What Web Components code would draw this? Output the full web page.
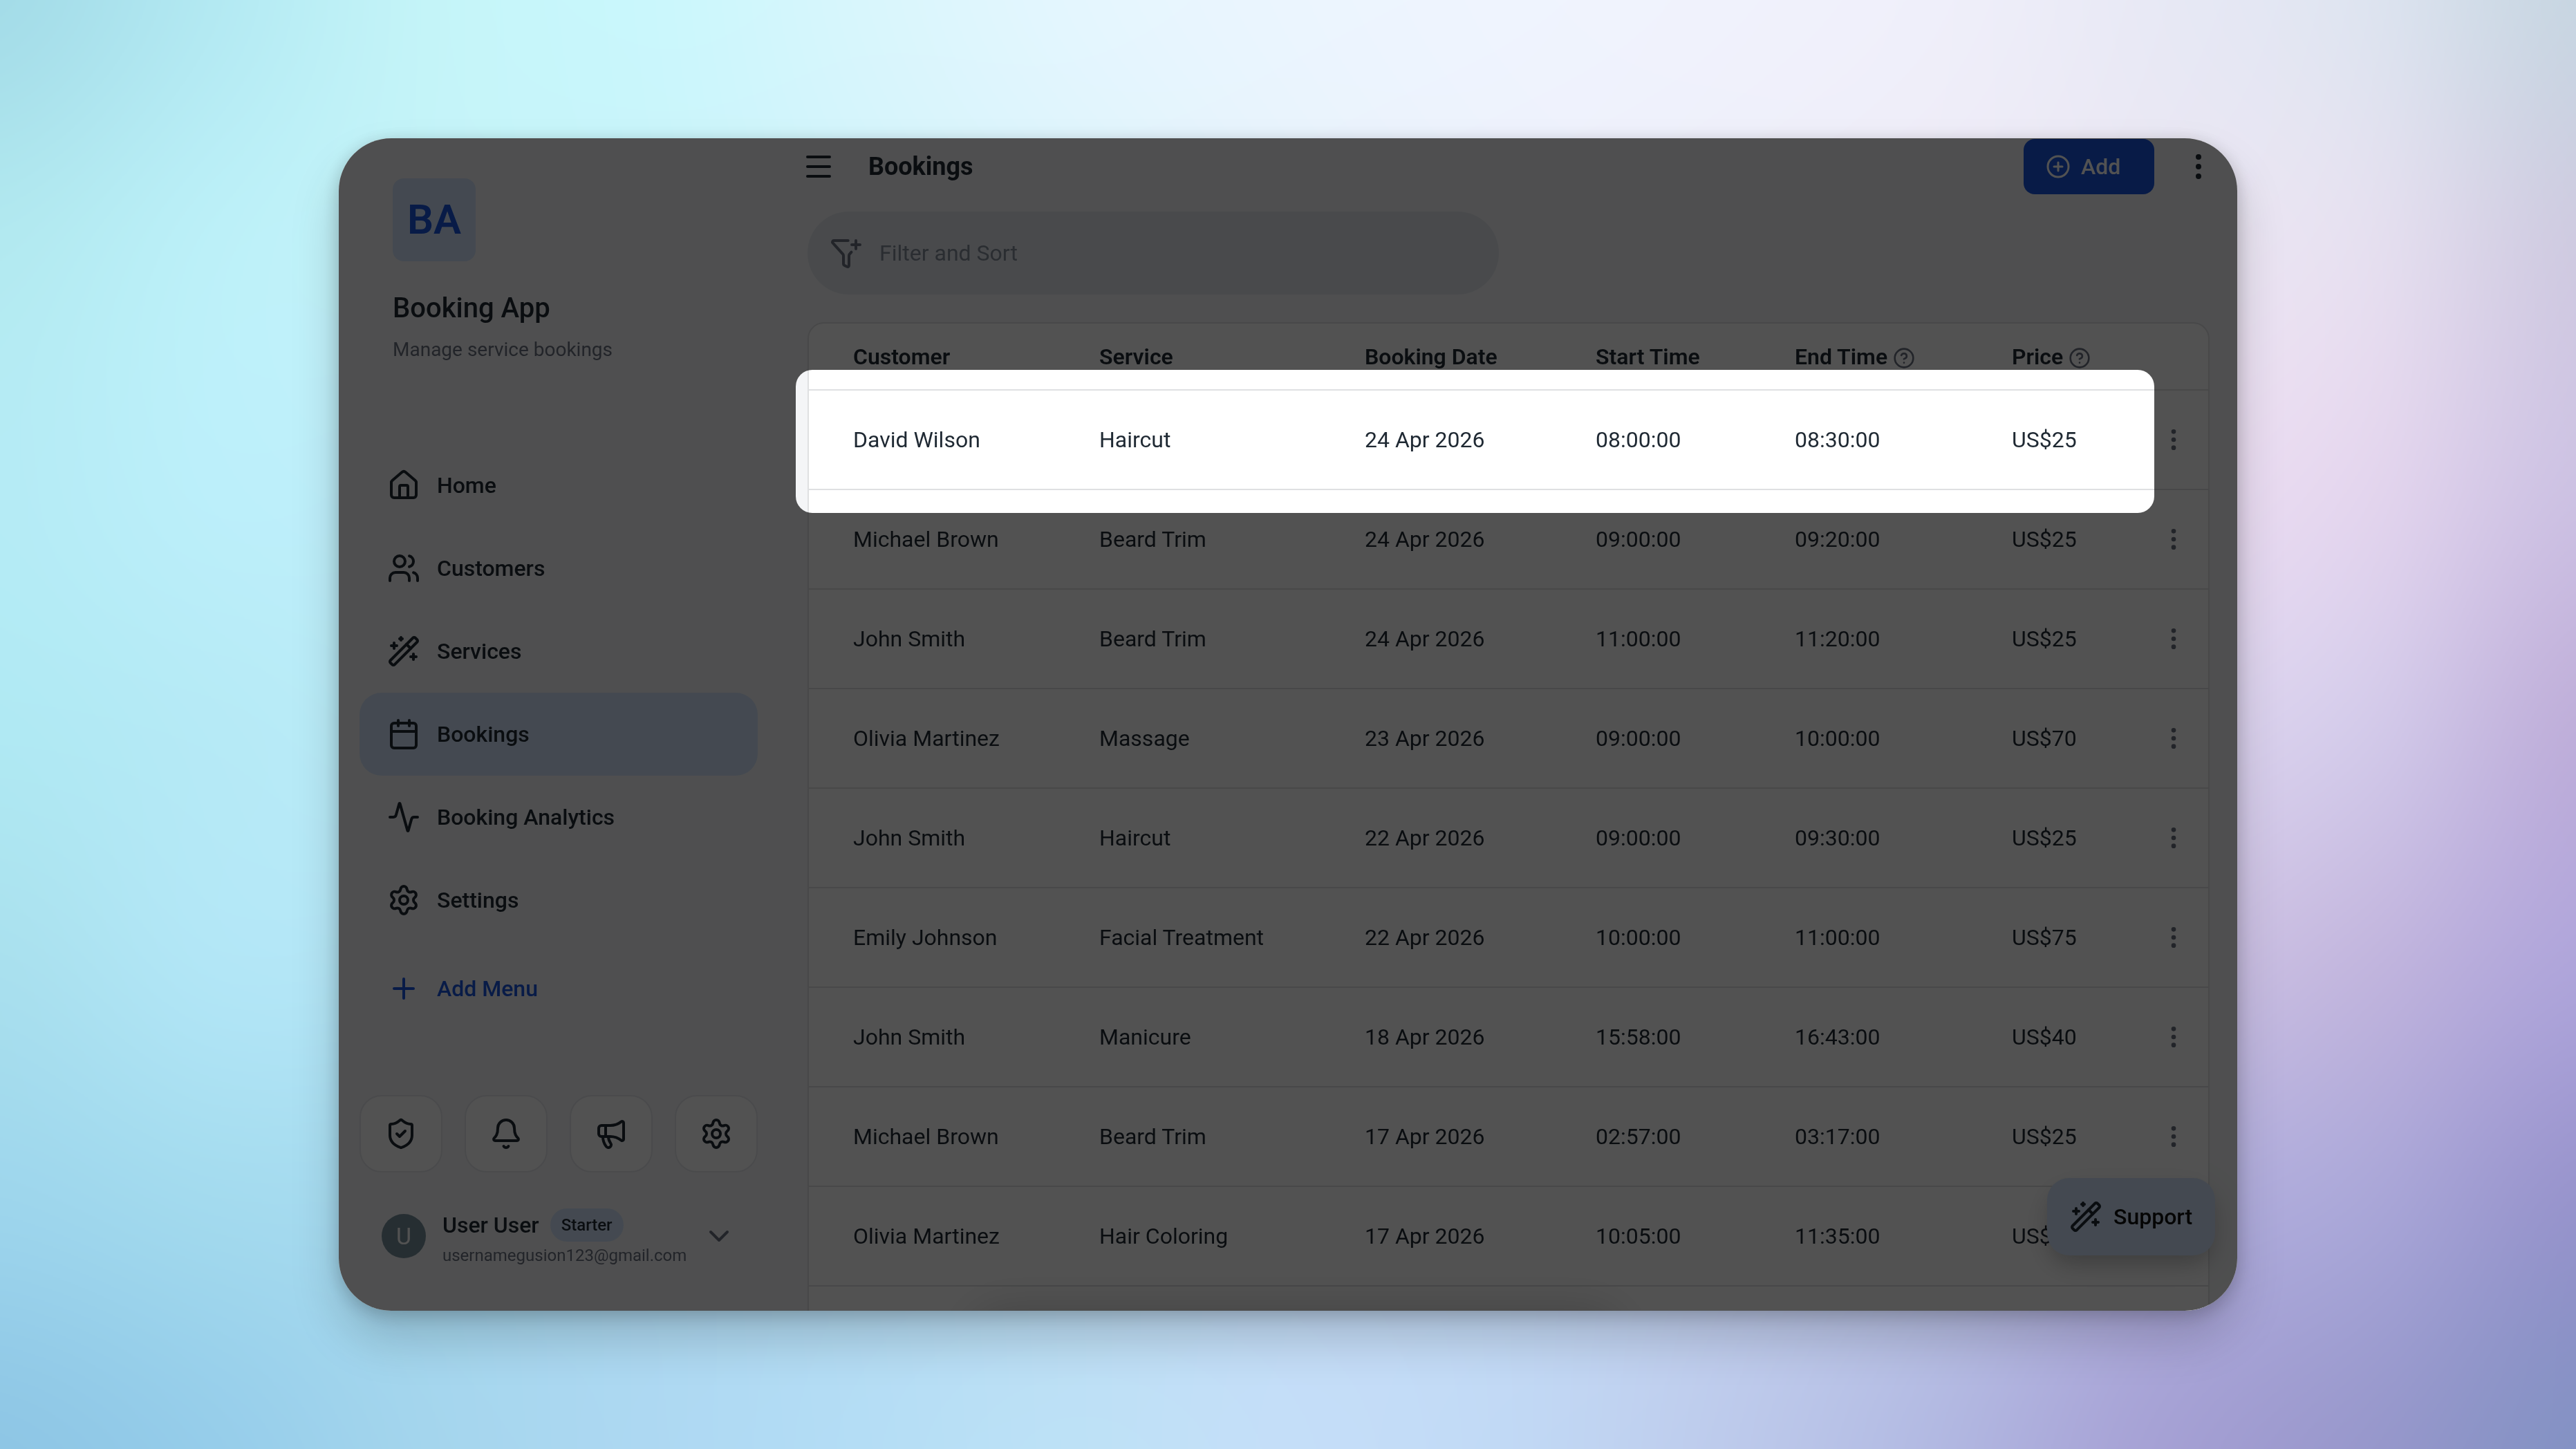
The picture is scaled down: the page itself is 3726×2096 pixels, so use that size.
<!DOCTYPE html>
<html lang="en">
<head>
<meta charset="utf-8">
<title>Booking App</title>
<style>
	html, body {
		margin: 0;
		height: 100%;
	}

	body {
		font-family: Roboto, "Liberation Sans", sans-serif;
		font-size: 32px;
		color: #1f2933;
		overflow: hidden;

		--primary: #1a56db;
		--tint: #d2e4fa;
		--surface: #f4f5f7;
		--line: #dfe0e2;
		--muted: #6b7280;
	}
</style>
</head>
<body>

<mesh-backdrop>
	<app-window>
		<side-bar slot="side">
			<brand-block initials="BA" name="Booking App">Manage service bookings</brand-block>
			<nav-item icon="house">Home</nav-item>
			<nav-item icon="users">Customers</nav-item>
			<nav-item icon="wand">Services</nav-item>
			<nav-item icon="calendar" active>Bookings</nav-item>
			<nav-item icon="activity">Booking Analytics</nav-item>
			<nav-item icon="settings">Settings</nav-item>
			<nav-item icon="plus" accent>Add Menu</nav-item>
			<quick-actions icons="shield bell megaphone settings"></quick-actions>
			<user-card name="User User" plan="Starter" email="usernamegusion123@gmail.com"></user-card>
		</side-bar>

		<page-header>Bookings</page-header>
		<filter-bar>Filter and Sort</filter-bar>
		<booking-table></booking-table>

		<bottom-sheet slot="over"></bottom-sheet>
		<support-button slot="over">Support</support-button>
		<spot-light slot="over"></spot-light>
	</app-window>
</mesh-backdrop>

<script>
const ICONS = {
	house: '<path d="M15 21v-8a1 1 0 0 0-1-1h-4a1 1 0 0 0-1 1v8"/><path d="M3 10a2 2 0 0 1 .709-1.528l7-5.999a2 2 0 0 1 2.582 0l7 5.999A2 2 0 0 1 21 10v9a2 2 0 0 1-2 2H5a2 2 0 0 1-2-2z"/>',
	users: '<path d="M16 21v-2a4 4 0 0 0-4-4H6a4 4 0 0 0-4 4v2"/><circle cx="9" cy="7" r="4"/><path d="M22 21v-2a4 4 0 0 0-3-3.87"/><path d="M16 3.13a4 4 0 0 1 0 7.75"/>',
	wand: '<path d="m21.64 3.64-1.28-1.28a1.21 1.21 0 0 0-1.72 0L2.36 18.64a1.21 1.21 0 0 0 0 1.72l1.28 1.28a1.2 1.2 0 0 0 1.72 0L21.64 5.36a1.2 1.2 0 0 0 0-1.72"/><path d="m14 7 3 3"/><path d="M5 6v4"/><path d="M19 14v4"/><path d="M10 2v2"/><path d="M7 8H3"/><path d="M21 16h-4"/><path d="M11 3H9"/>',
	calendar: '<path d="M8 2v4"/><path d="M16 2v4"/><rect width="18" height="18" x="3" y="4" rx="2"/><path d="M3 10h18"/>',
	activity: '<path d="M22 12h-2.48a2 2 0 0 0-1.93 1.46l-2.35 8.36a.25.25 0 0 1-.48 0L9.24 2.18a.25.25 0 0 0-.48 0l-2.35 8.36A2 2 0 0 1 4.49 12H2"/>',
	settings: '<path d="M9.671 4.136a2.34 2.34 0 0 1 4.659 0 2.34 2.34 0 0 0 3.319 1.915 2.34 2.34 0 0 1 2.33 4.033 2.34 2.34 0 0 0 0 3.831 2.34 2.34 0 0 1-2.33 4.033 2.34 2.34 0 0 0-3.319 1.915 2.34 2.34 0 0 1-4.659 0 2.34 2.34 0 0 0-3.32-1.915 2.34 2.34 0 0 1-2.33-4.033 2.34 2.34 0 0 0 0-3.831A2.34 2.34 0 0 1 6.35 6.051a2.34 2.34 0 0 0 3.319-1.915"/><circle cx="12" cy="12" r="3"/>',
	plus: '<path d="M5 12h14"/><path d="M12 5v14"/>',
	shield: '<path d="M20 13c0 5-3.5 7.5-7.66 8.95a1 1 0 0 1-.67-.01C7.5 20.5 4 18 4 13V6a1 1 0 0 1 1-1c2 0 4.5-1.2 6.24-2.72a1.17 1.17 0 0 1 1.52 0C14.51 3.81 17 5 19 5a1 1 0 0 1 1 1z"/><path d="m9 12 2 2 4-4"/>',
	bell: '<path d="M10.268 21a2 2 0 0 0 3.464 0"/><path d="M3.262 15.326A1 1 0 0 0 4 17h16a1 1 0 0 0 .74-1.673C19.41 13.956 18 12.499 18 8A6 6 0 0 0 6 8c0 4.499-1.411 5.956-2.738 7.326"/>',
	megaphone: '<path d="M11 6a13 13 0 0 0 8.4-2.8A1 1 0 0 1 21 4v12a1 1 0 0 1-1.6.8A13 13 0 0 0 11 14H5a2 2 0 0 1-2-2V8a2 2 0 0 1 2-2z"/><path d="M6 14a12 12 0 0 0 2.4 7.2 2 2 0 0 0 3.2-2.4A8 8 0 0 1 10 14"/><path d="M8 6v8"/>',
	chevron: '<path d="m6 9 6 6 6-6"/>',
	menu: '<path d="M4 5h16"/><path d="M4 12h16"/><path d="M4 19h16"/>',
	circlePlus: '<circle cx="12" cy="12" r="10"/><path d="M8 12h8"/><path d="M12 8v8"/>',
	help: '<circle cx="12" cy="12" r="10"/><path d="M9.09 9a3 3 0 0 1 5.83 1c0 2-3 3-3 3"/><path d="M12 17h.01"/>',
	more: '<circle cx="12" cy="12" r="1"/><circle cx="12" cy="5" r="1"/><circle cx="12" cy="19" r="1"/>',
	funnelPlus: '<path d="M13.354 3H3a1 1 0 0 0-.742 1.67l7.225 7.989A2 2 0 0 1 10 14v6a1 1 0 0 0 .553.895l2 1A1 1 0 0 0 14 21v-7a2 2 0 0 1 .517-1.341l1.218-1.348"/><path d="M16 6h6"/><path d="M19 3v6"/>'
};

// Colour samples for the backdrop, 13 x 7, spread evenly from edge to edge
const MESH = [
	'a4dce8 b3e9f2 c4f4f8 caf7fc d8f6fc e4f6fe ebf5fe eff4fe f0f2fc efeffa e8e9f5 dee4f0 c8d6e2',
	'b2e9f0 bcf0f8 c4f3f9 c8f3fa d2f3fb dcf3fc e6f2fc ecf0fc eeeefa eeeaf6 ebe6f3 e6e0f0 cfcbe1',
	'b5ebf5 bceffa bfeef9 c2eef8 ccf0f8 d6eefa e0ecfa e6eafa eae8f8 ecdff0 ebdef2 e4d6ee cdc2e3',
	'b0e9f3 b6eaf6 bbecf8 beeaf6 c4eaf6 cee8f8 d6e6f8 dce2f6 e0def4 e0d8f0 ded4ee d4cbea bfafda',
	'a9e0ee b2e6f6 b4e5f5 b6e4f3 bce4f4 c4e2f6 cce0f6 d0dcf4 d2d4ee cfcaec cdc4e6 c2b6de afa5da',
	'9dd5ec a3daee a8daf0 aedaf0 b6dcf2 bedcf4 c4dcf6 c6d9f4 c4d0ee bec4e6 b3b0de aaa7d8 9794cc',
	'8ec6e5 96cdea a4d5ed add8f2 b4ddf5 bde1f6 c4def8 c1d9f5 bdcbec b2b9e2 a6a2d5 9898cc 8492c4'
];

const COLUMNS = [
	{ label: 'Customer' },
	{ label: 'Service' },
	{ label: 'Booking Date' },
	{ label: 'Start Time' },
	{ label: 'End Time', help: true },
	{ label: 'Price', help: true }
];

const BOOKINGS = [
	['David Wilson', 'Haircut', '24 Apr 2026', '08:00:00', '08:30:00', 'US$25'],
	['Michael Brown', 'Beard Trim', '24 Apr 2026', '09:00:00', '09:20:00', 'US$25'],
	['John Smith', 'Beard Trim', '24 Apr 2026', '11:00:00', '11:20:00', 'US$25'],
	['Olivia Martinez', 'Massage', '23 Apr 2026', '09:00:00', '10:00:00', 'US$70'],
	['John Smith', 'Haircut', '22 Apr 2026', '09:00:00', '09:30:00', 'US$25'],
	['Emily Johnson', 'Facial Treatment', '22 Apr 2026', '10:00:00', '11:00:00', 'US$75'],
	['John Smith', 'Manicure', '18 Apr 2026', '15:58:00', '16:43:00', 'US$40'],
	['Michael Brown', 'Beard Trim', '17 Apr 2026', '02:57:00', '03:17:00', 'US$25'],
	['Olivia Martinez', 'Hair Coloring', '17 Apr 2026', '10:05:00', '11:35:00', 'US$70']
];

class BaseElement extends HTMLElement {
	constructor() {
		super();
		this.attachShadow({ mode: 'open' });
	}

	connectedCallback() {
		this.shadowRoot.innerHTML = this.render();
	}
}

class AppIcon extends BaseElement {
	render() {
		const size = this.getAttribute('size') || 48;
		const stroke = this.getAttribute('stroke') || 2;
		return `
		<style>
			:host {
				display: block;
				flex: none;
				width: ${size}px;
				height: ${size}px;
			}
			svg {
				display: block;
			}
		</style>
		<svg width="${size}" height="${size}" viewBox="0 0 24 24" fill="none" stroke="currentColor"
			stroke-width="${stroke}" stroke-linecap="round" stroke-linejoin="round">${ICONS[this.getAttribute('name')]}</svg>`;
	}
}

class MeshBackdrop extends BaseElement {
	render() {
		return `
		<style>
			:host {
				display: grid;
				grid-template: 100% / 100%;
				width: 100%;
				height: 100%;
			}
			canvas, .stage {
				grid-area: 1 / 1;
			}
			canvas {
				display: block;
				width: 100%;
				height: 100%;
			}
			.stage {
				display: flex;
				justify-content: center;
				align-items: center;
			}
		</style>
		<canvas width="1863" height="1048"></canvas>
		<div class="stage"><slot></slot></div>`;
	}

	connectedCallback() {
		super.connectedCallback();
		this.paint(this.shadowRoot.querySelector('canvas'));
	}

	paint(canvas) {
		const grid = MESH.map(row => row.split(' ').map(hex => [0, 2, 4].map(i => parseInt(hex.substr(i, 2), 16))));
		const cols = grid[0].length;
		const rows = grid.length;
		const ctx = canvas.getContext('2d');
		const image = ctx.createImageData(canvas.width, canvas.height);

		// Catmull-Rom between four neighbouring samples
		const spline = (a, b, c, d, t) =>
			b + 0.5 * t * (c - a + t * (2 * a - 5 * b + 4 * c - d + t * (3 * (b - c) + d - a)));
		const clamp = (v, max) => Math.max(0, Math.min(max, v));

		for (let y = 0; y < canvas.height; y++) {
			const gy = y / (canvas.height - 1) * (rows - 1);
			const iy = Math.min(Math.floor(gy), rows - 2);
			const line = grid[0].map((_, c) => [0, 1, 2].map(k => spline(
				...[-1, 0, 1, 2].map(o => grid[clamp(iy + o, rows - 1)][c][k]), gy - iy)));
			for (let x = 0; x < canvas.width; x++) {
				const gx = x / (canvas.width - 1) * (cols - 1);
				const ix = Math.min(Math.floor(gx), cols - 2);
				const p = (y * canvas.width + x) * 4;
				const a = line[clamp(ix - 1, cols - 1)];
				const b = line[ix];
				const c = line[ix + 1];
				const d = line[clamp(ix + 2, cols - 1)];
				for (let k = 0; k < 3; k++) {
					image.data[p + k] = spline(a[k], b[k], c[k], d[k], gx - ix);
				}
				image.data[p + 3] = 255;
			}
		}
		ctx.putImageData(image, 0, 0);
	}
}

class AppWindow extends BaseElement {
	render() {
		return `
		<style>
			:host {
				position: relative;
				display: grid;
				grid-template-columns: 670px 1fr;
				width: 2746px;
				height: 1696px;
				border-radius: 76px;
				overflow: hidden;
				background: var(--surface);
				box-shadow: 0 6px 26px rgba(0, 0, 0, .2), 0 40px 70px rgba(0, 0, 0, .18);
			}
			main {
				min-width: 0;
				height: 1696px;
				padding-right: 32px;
				box-sizing: border-box;
				overflow: hidden;
			}
		</style>
		<slot name="side"></slot>
		<main><slot></slot></main>
		<slot name="over"></slot>`;
	}
}

class SideBar extends BaseElement {
	render() {
		return `
		<style>
			:host {
				display: flex;
				flex-direction: column;
				width: 576px;
				padding: 58px 30px 0;
			}
		</style>
		<slot></slot>`;
	}
}

class BrandBlock extends BaseElement {
	render() {
		return `
		<style>
			:host {
				display: block;
				height: 384px;
				padding-left: 48px;
			}
			.logo {
				display: flex;
				justify-content: center;
				align-items: center;
				width: 120px;
				height: 120px;
				padding-bottom: 2px;
				box-sizing: border-box;
				border-radius: 16px;
				background: var(--tint);
				color: var(--primary);
				font-size: 60px;
				font-weight: 600;
			}
			.name {
				margin-top: 44px;
				font-size: 40px;
				line-height: 48px;
				font-weight: 500;
			}
			.about {
				margin-top: 16px;
				font-size: 28px;
				line-height: 40px;
				color: var(--muted);
			}
		</style>
		<div class="logo">${this.getAttribute('initials')}</div>
		<div class="name">${this.getAttribute('name')}</div>
		<div class="about"><slot></slot></div>`;
	}
}

class NavItem extends BaseElement {
	render() {
		return `
		<style>
			:host {
				display: flex;
				align-items: center;
				gap: 24px;
				height: 120px;
				padding-left: 40px;
				border-radius: 32px;
				font-weight: 500;
			}
			:host([active]) {
				background: var(--tint);
			}
			:host([accent]) {
				margin-top: 8px;
				color: var(--primary);
			}
		</style>
		<app-icon name="${this.getAttribute('icon')}"></app-icon>
		<span><slot></slot></span>`;
	}
}

class QuickActions extends BaseElement {
	render() {
		const buttons = this.getAttribute('icons').split(' ')
			.map(name => `<div class="button"><app-icon name="${name}"></app-icon></div>`)
			.join('');
		return `
		<style>
			:host {
				display: grid;
				grid-template-columns: repeat(4, 120px);
				gap: 32px;
				margin-top: 94px;
			}
			.button {
				display: flex;
				justify-content: center;
				align-items: center;
				height: 112px;
				box-sizing: border-box;
				border: 2px solid #e5e7eb;
				border-radius: 32px;
				background: #fff;
			}
		</style>
		${buttons}`;
	}
}

class UserCard extends BaseElement {
	render() {
		const name = this.getAttribute('name');
		return `
		<style>
			:host {
				display: flex;
				align-items: center;
				height: 84px;
				margin-top: 50px;
				padding: 0 32px;
			}
			.avatar {
				display: flex;
				justify-content: center;
				align-items: center;
				width: 64px;
				height: 64px;
				border-radius: 50%;
				background: #78909c;
				color: #fff;
				font-size: 34px;
			}
			.info {
				margin: 4px 0 0 24px;
			}
			.row {
				display: flex;
				gap: 16px;
				line-height: 48px;
				font-weight: 500;
			}
			.plan {
				padding: 0 16px;
				border-radius: 24px;
				background: var(--tint);
				font-size: 24px;
			}
			.email {
				margin-top: 4px;
				font-size: 24px;
				line-height: 32px;
				color: var(--muted);
			}
			app-icon {
				margin-left: auto;
				color: var(--muted);
			}
		</style>
		<div class="avatar">${name[0]}</div>
		<div class="info">
			<div class="row"><span>${name}</span><span class="plan">${this.getAttribute('plan')}</span></div>
			<div class="email">${this.getAttribute('email')}</div>
		</div>
		<app-icon name="chevron"></app-icon>`;
	}
}

class PageHeader extends BaseElement {
	render() {
		return `
		<style>
			:host {
				display: flex;
				align-items: center;
				height: 82px;
			}
			h1 {
				flex: 1;
				margin: 0 0 0 48px;
				font-size: 36px;
				font-weight: 700;
			}
			.add {
				display: flex;
				align-items: center;
				gap: 15px;
				width: 189px;
				height: 80px;
				margin-right: 40px;
				padding-left: 32px;
				box-sizing: border-box;
				border-radius: 16px;
				background: var(--primary);
				color: #fff;
				font-weight: 500;
			}
		</style>
		<app-icon name="menu"></app-icon>
		<h1><slot></slot></h1>
		<div class="add"><app-icon name="circlePlus" size="36"></app-icon><span>Add</span></div>
		<app-icon name="more"></app-icon>`;
	}
}

class FilterBar extends BaseElement {
	render() {
		return `
		<style>
			:host {
				display: flex;
				align-items: center;
				gap: 24px;
				width: 1000px;
				height: 120px;
				margin: 24px 0 0 8px;
				padding-left: 32px;
				box-sizing: border-box;
				border-radius: 60px;
				background: #e2e7ed;
				color: #848c99;
			}
			app-icon {
				color: var(--muted);
			}
		</style>
		<app-icon name="funnelPlus"></app-icon>
		<span><slot></slot></span>`;
	}
}

class BookingTable extends BaseElement {
	render() {
		const head = COLUMNS
			.map(col => `<div class="cell">${col.label}${col.help ? '<app-icon name="help" size="32"></app-icon>' : ''}</div>`)
			.join('');
		const body = BOOKINGS
			.map(row => `<div class="row">${row.map(text => `<div class="cell">${text}</div>`).join('')}<app-icon name="more" size="40"></app-icon></div>`)
			.join('');
		return `
		<style>
			:host {
				display: block;
				height: 1700px;
				margin: 40px 8px 0;
				box-sizing: border-box;
				border: 2px solid var(--line);
				border-radius: 24px;
				background: #fff;
			}
			.row {
				display: grid;
				grid-template-columns: 356px 384px 334px 288px 314px 1fr auto;
				align-items: center;
				height: 144px;
				box-sizing: border-box;
				padding: 0 30px 0 64px;
				border-bottom: 2px solid var(--line);
			}
			.head {
				height: 97px;
				font-weight: 600;
			}
			.cell {
				display: flex;
				align-items: center;
				gap: 8px;
				white-space: nowrap;
			}
			app-icon {
				color: var(--muted);
			}
			.cell app-icon {
				margin-top: 4px;
			}
		</style>
		<div class="row head">${head}</div>
		${body}`;
	}
}

// Sits just past the lower edge of the window, only its shadow shows
class BottomSheet extends BaseElement {
	render() {
		return `
		<style>
			:host {
				position: absolute;
				left: 920px;
				top: 1700px;
				width: 930px;
				height: 100px;
				border-radius: 32px;
				box-shadow: 0 0 70px rgba(0, 0, 0, .2);
			}
		</style>`;
	}
}

class SupportButton extends BaseElement {
	render() {
		return `
		<style>
			:host {
				position: absolute;
				right: 32px;
				bottom: 80px;
				display: flex;
				align-items: center;
				gap: 16px;
				width: 243px;
				height: 112px;
				padding-left: 32px;
				box-sizing: border-box;
				border-radius: 32px;
				background: var(--tint);
				color: #1f2933;
				font-weight: 500;
				box-shadow: 0 16px 32px -8px rgba(0, 0, 0, .22), 0 16px 60px rgba(0, 0, 0, .08);
			}
			span {
				color: #111;
			}
		</style>
		<app-icon name="wand"></app-icon>
		<span><slot></slot></span>`;
	}
}

// Dims the whole window except for the first booking
class SpotLight extends BaseElement {
	render() {
		return `
		<style>
			:host {
				position: absolute;
				left: 661px;
				top: 335px;
				width: 1965px;
				height: 207px;
				border-radius: 24px;
				box-shadow: 0 0 0 3000px rgba(0, 0, 0, .68);
			}
		</style>`;
	}
}

customElements.define('app-icon', AppIcon);
customElements.define('mesh-backdrop', MeshBackdrop);
customElements.define('app-window', AppWindow);
customElements.define('side-bar', SideBar);
customElements.define('brand-block', BrandBlock);
customElements.define('nav-item', NavItem);
customElements.define('quick-actions', QuickActions);
customElements.define('user-card', UserCard);
customElements.define('page-header', PageHeader);
customElements.define('filter-bar', FilterBar);
customElements.define('booking-table', BookingTable);
customElements.define('bottom-sheet', BottomSheet);
customElements.define('support-button', SupportButton);
customElements.define('spot-light', SpotLight);
</script>
</body>
</html>
